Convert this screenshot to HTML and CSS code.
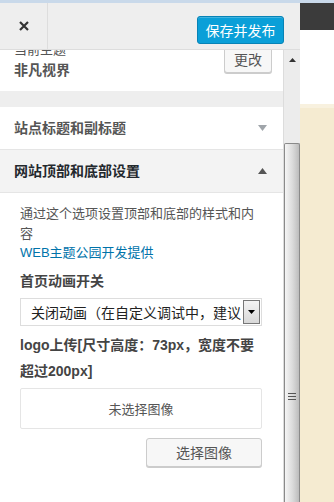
FILE: index.html
```html
<!DOCTYPE html>
<html lang="zh-CN">
<head>
    <meta charset="UTF-8">
    <meta name="viewport" content="width=device-width, initial-scale=1.0">
    <title>自定义</title>
    <link rel="stylesheet" href="styles.css">
</head>
<body>

<div class="topline"></div>

<div class="main">
    <div class="panel">
        <div class="header">
            <button class="close" type="button" aria-label="关闭">
                <svg width="10" height="10" viewBox="0 0 10 10"><path d="M1 1L9 9M9 1L1 9" stroke="#333" stroke-width="2.2"/></svg>
            </button>
            <button class="publish" type="button">保存并发布</button>
        </div>

        <div class="body">
            <div class="content">
                <div class="scrolled">
                    <div class="theme">
                        <div>
                            <div class="theme-label">当前主题</div>
                            <div class="theme-name">非凡视界</div>
                        </div>
                        <button class="btn-change" type="button">更改</button>
                    </div>

                    <div class="gap"></div>

                    <div class="section">
                        <span>站点标题和副标题</span>
                        <svg width="9" height="6" viewBox="0 0 9 6"><path d="M0 0H9L4.5 6Z" fill="#a0a5aa"/></svg>
                    </div>

                    <div class="section open">
                        <span>网站顶部和底部设置</span>
                        <svg width="9" height="6" viewBox="0 0 9 6"><path d="M0 6H9L4.5 0Z" fill="#555"/></svg>
                    </div>

                    <div class="options">
                        <p class="desc">通过这个选项设置顶部和底部的样式和内容<br><a href="#">WEB主题公园开发提供</a></p>

                        <div class="label">首页动画开关</div>
                        <div class="select">
                            <span class="select-text">关闭动画（在自定义调试中，建议</span>
                            <span class="select-arrow">
                                <svg width="7" height="4" viewBox="0 0 7 4"><path d="M0 0H7L3.5 4Z" fill="#000"/></svg>
                            </span>
                        </div>

                        <div class="label tall">logo上传[尺寸高度：73px，宽度不要超过200px]</div>
                        <div class="placeholder">未选择图像</div>
                        <div class="actions">
                            <button class="btn-pick" type="button">选择图像</button>
                        </div>
                    </div>
                </div>
            </div>

            <div class="scrollbar">
                <div class="arrow-up">
                    <svg width="7" height="4" viewBox="0 0 7 4"><path d="M0 4H7L3.5 0Z" fill="#333"/></svg>
                </div>
                <div class="thumb">
                    <div class="grip"></div>
                </div>
            </div>
        </div>
    </div>

    <div class="preview">
        <div class="preview-bar"></div>
        <div class="preview-white"></div>
        <div class="preview-cream"></div>
    </div>
</div>

</body>
</html>
```

FILE: styles.css
```css
/* Resetting Defaults */
* {
    margin: 0;
    padding: 0;
    box-sizing: border-box;
}

body {
    font-family: "Liberation Sans", "Noto Sans CJK SC", sans-serif;
    font-size: 13px;
    color: #555;
    width: 334px;
    height: 502px;
    overflow: hidden;
    background: #fff;
}

button {
    font-family: inherit;
    cursor: pointer;
}

.topline {
    height: 3px;
    background-color: #c9d9ea;
}

.main {
    display: flex;
    height: 499px;
}

/* Customizer Panel */
.panel {
    width: 300px;
    display: flex;
    flex-direction: column;
    background-color: #fff;
}

.header {
    height: 47px;
    display: flex;
    align-items: center;
    justify-content: space-between;
    background-color: #eee;
    border-bottom: 1px solid #ddd;
    padding-right: 16px;
}

.close {
    width: 48px;
    height: 46px;
    border: none;
    border-right: 1px solid #ddd;
    background: transparent;
    display: flex;
    align-items: center;
    justify-content: center;
}

.publish {
    width: 87px;
    height: 28px;
    margin-top: 8px;
    background-color: #0a9fd8;
    border: 1px solid #0783b6;
    border-radius: 3px;
    color: #fff;
    font-size: 14px;
    box-shadow: inset 0 1px 0 rgba(120, 200, 230, 0.5);
}

.body {
    flex: 1;
    display: flex;
    min-height: 0;
}

.content {
    width: 283px;
    overflow: hidden;
}

.scrolled {
    margin-top: -10px;
}

.theme {
    display: flex;
    justify-content: space-between;
    align-items: flex-start;
    padding: 0 11px 9px 14px;
}

.theme-label {
    line-height: 20px;
}

.theme-name {
    font-size: 14px;
    font-weight: bold;
    line-height: 20px;
}

.btn-change {
    width: 48px;
    height: 28px;
    margin-top: 5px;
    background-color: #f7f7f7;
    border: 1px solid #ccc;
    border-radius: 3px;
    box-shadow: 0 1px 0 #ccc;
    color: #555;
    font-size: 14px;
}

.gap {
    height: 16px;
    margin-top: 2px;
    background-color: #eee;
}

.section {
    height: 43px;
    display: flex;
    align-items: center;
    justify-content: space-between;
    padding: 0 16px 0 14px;
    border-bottom: 1px solid #e5e5e5;
    font-size: 14px;
    font-weight: bold;
    color: #555;
    background-color: #fff;
}

.section span {
    margin-top: -2px;
}

.section.open {
    background-color: #f3f3f3;
    color: #23282d;
}

.options {
    padding: 11px 21px 0 20px;
}

.desc {
    line-height: 19.5px;
}

.desc a {
    color: #0073aa;
    text-decoration: none;
}

.label {
    margin-top: 8px;
    font-size: 14px;
    font-weight: bold;
    line-height: 20px;
    color: #444;
}

.label.tall {
    margin-top: 6px;
    line-height: 26px;
}

.select {
    margin-top: 7px;
    height: 28px;
    display: flex;
    align-items: center;
    border: 1px solid #ddd;
    padding: 1px;
}

.select-text {
    flex: 1;
    padding-left: 9px;
    font-size: 14px;
    color: #222;
    white-space: nowrap;
    overflow: hidden;
}

.select-arrow {
    width: 17px;
    height: 24px;
    display: flex;
    align-items: center;
    justify-content: center;
    border: 1px solid #777;
    background: linear-gradient(#f4f4f4, #d8d8d8);
}

.placeholder {
    margin-top: 4px;
    height: 41px;
    display: flex;
    align-items: center;
    justify-content: center;
    border: 1px solid #e5e5e5;
    border-radius: 2px;
    color: #555;
}

.actions {
    display: flex;
    justify-content: flex-end;
    margin-top: 9px;
}

.btn-pick {
    width: 116px;
    height: 29px;
    background-color: #f7f7f7;
    border: 1px solid #ccc;
    border-radius: 3px;
    box-shadow: 0 1px 0 #ccc;
    color: #555;
    font-size: 14px;
}

/* Fake scrollbar */
.scrollbar {
    width: 17px;
    display: flex;
    flex-direction: column;
    background-color: #ececec;
    border-left: 1px solid #dcdcdc;
}

.arrow-up {
    height: 18px;
    display: flex;
    align-items: center;
    justify-content: center;
    padding-top: 2px;
}

.thumb {
    flex: 1;
    margin-top: 75px;
    border: 1px solid #8a8a8a;
    border-bottom: none;
    border-radius: 2px 2px 0 0;
    background: linear-gradient(to right, #f5f5f5, #dadada 55%, #bcbcbc);
    display: flex;
    justify-content: center;
    padding-top: 249px;
}

.grip {
    width: 8px;
    height: 7px;
    border-top: 1px solid #555;
    border-bottom: 1px solid #555;
    background: linear-gradient(transparent 2px, #555 2px, #555 3px, transparent 3px);
}

/* Preview side */
.preview {
    flex: 1;
    display: flex;
    flex-direction: column;
}

.preview-bar {
    height: 27px;
    background-color: #3b3b3b;
}

.preview-white {
    height: 74px;
    background-color: #fff;
}

.preview-cream {
    flex: 1;
    background-color: #f5ebd1;
    border-top: 4px solid #f8f1df;
}
```
